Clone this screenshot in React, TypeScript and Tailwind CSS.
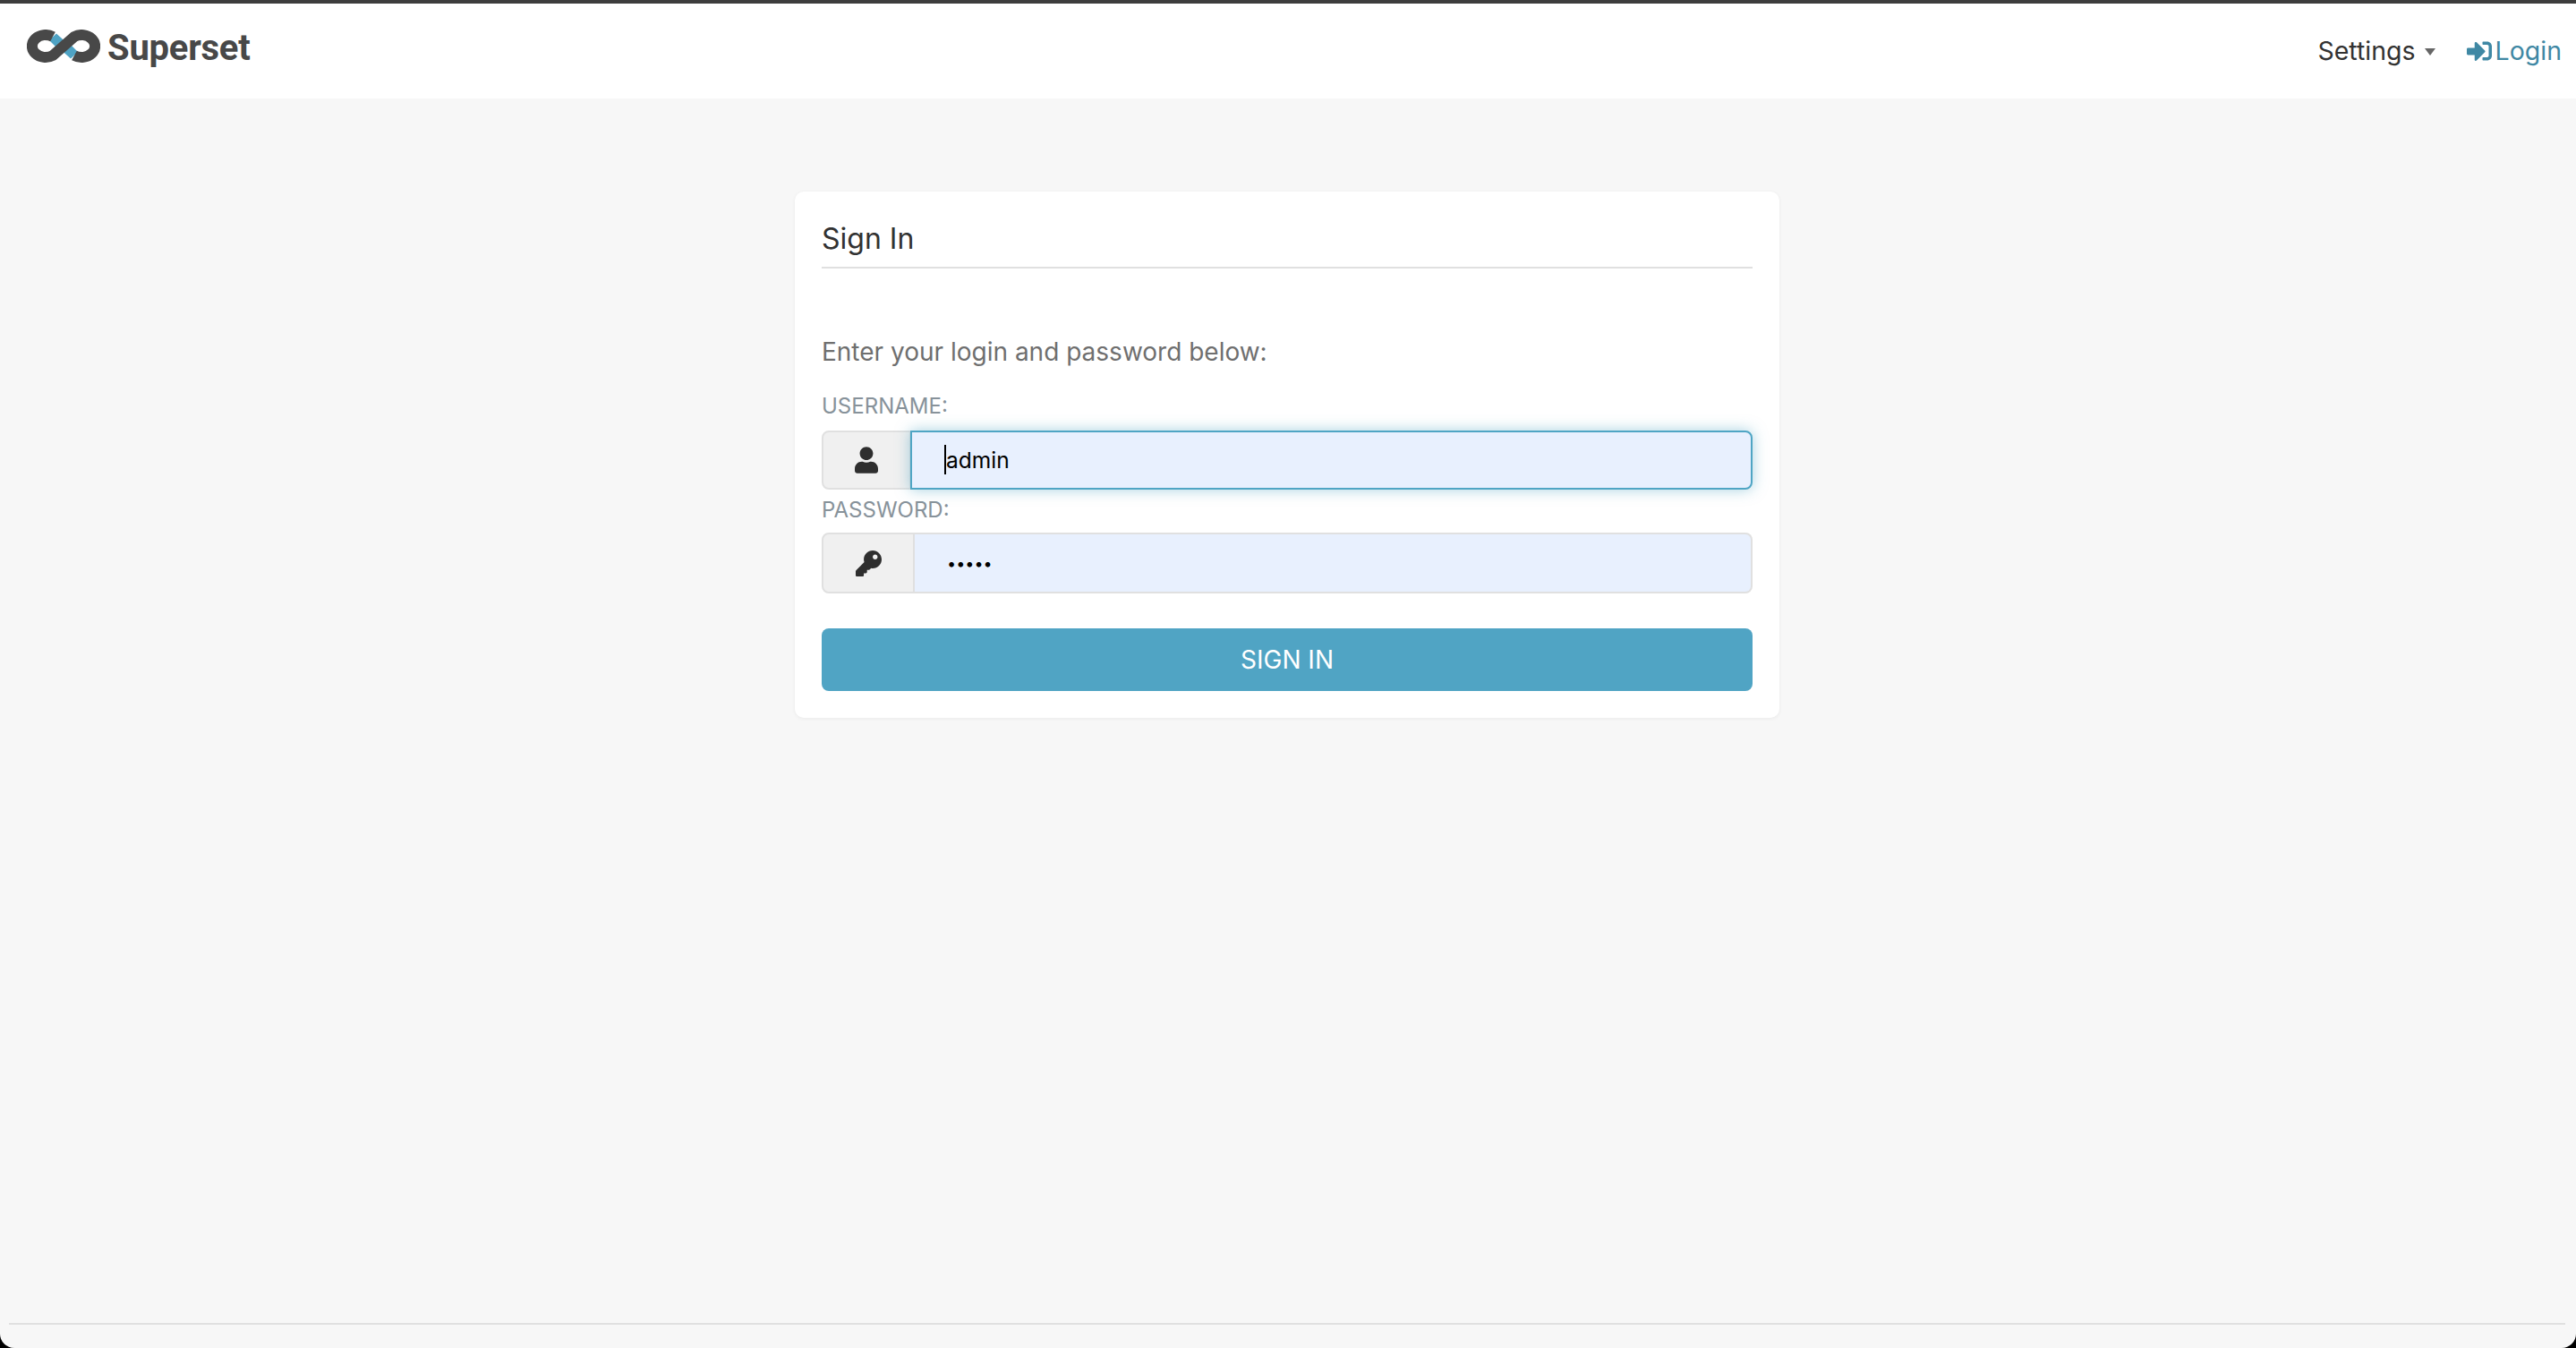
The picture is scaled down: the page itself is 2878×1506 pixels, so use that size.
import type { FC } from 'react'
import { FaKey, FaSignInAlt, FaUser } from 'react-icons/fa'

const Logo: FC = () => (
  <svg viewBox="0 0 82 38" className="w-[82px] h-[38px] mb-[4px]" fill="none">
    <polygon points="25,12 33,4.5 42.7,13.3 35,22" fill="#4fa3c4" />
    <polygon points="57,25 49,32.5 39.3,23.7 47,15" fill="#4fa3c4" />
    <path
      d="M29 8 A15 12.5 0 1 0 29 29 L53 8 A15 12.5 0 1 1 53 29"
      stroke="#484848"
      strokeWidth="12"
    />
  </svg>
)

const App: FC = () => {
  return (
    <div className="bg-black">
      <div className="h-[1506px] flex flex-col bg-[#f7f7f7] rounded-b-[16px] font-['Inter',sans-serif]">
        <header className="h-[110px] shrink-0 bg-white border-t-4 border-[#3d3d3d] pl-[30px] pr-[16px] flex items-center justify-between">
          <a className="flex items-center gap-[8px] mb-[6px]">
            <Logo />
            <span className="font-['Roboto',sans-serif] font-bold text-[40px] leading-none text-[#484848] tracking-[-0.25px]">
              Superset
            </span>
          </a>

          <nav className="flex items-center text-[28.5px]">
            <button className="flex items-center text-[#323232]">
              Settings
              <span className="ml-[10px] mt-[2px] w-0 h-0 border-x-[6px] border-t-[8px] border-x-transparent border-t-[#666666]" />
            </button>
            <a className="ml-[35px] flex items-center text-[#3f88a4]">
              <FaSignInAlt className="w-[28px] h-[28px] mr-[4px]" />
              Login
            </a>
          </nav>
        </header>

        <main className="flex-1 pt-[104px]">
          <div className="w-[1100px] ml-[888px] bg-white rounded-[10px] shadow-[0_1px_4px_rgba(0,0,0,0.06)] px-[30px] pt-[30px] pb-[30px]">
            <h4 className="text-[32px] leading-[46px] h-[56px] text-[#323232] border-b-2 border-[#e0e0e0]">Sign In</h4>

            <p className="mt-[73px] text-[28px] leading-[40px] text-[#6f6f6f]">
              Enter your login and password below:
            </p>

            <label className="block mt-[26px] text-[24px] leading-[30px] text-[#87929a]">USERNAME:</label>
            <div className="mt-[12px] flex h-[66px]">
              <span className="w-[100px] -mr-px shrink-0 flex items-center justify-center bg-[#f0f0f0] border-2 border-[#e0e0e0] rounded-l-[8px] text-[#2e2e2e]">
                <FaUser className="w-[26px] h-[30px]" />
              </span>
              <div className="relative flex-1">
                <input
                  type="text"
                  readOnly
                  value="admin"
                  className="w-full h-full pl-[38px] bg-[#e8f0fe] border-2 border-[#4fa5c4] rounded-r-[8px] shadow-[0_0_16px_rgba(79,165,196,0.5)] text-[24.5px] text-black outline-none"
                />
                <span className="absolute left-[38px] top-[16px] w-[2px] h-[33px] bg-black" />
              </div>
            </div>

            <label className="block mt-[8px] text-[24px] leading-[30px] text-[#87929a]">PASSWORD:</label>
            <div className="mt-[10px] flex h-[68px]">
              <span className="w-[104px] shrink-0 flex items-center justify-center bg-[#f0f0f0] border-2 border-[#e0e0e0] rounded-l-[8px] text-[#2e2e2e]">
                <FaKey className="w-[29px] h-[29px]" />
              </span>
              <input
                type="password"
                readOnly
                value="admin"
                className="flex-1 h-full pl-[36px] bg-[#e8f0fe] border-2 border-l-0 border-[#e0e0e0] rounded-r-[8px] text-[18px] text-black outline-none"
              />
            </div>

            <button className="mt-[39px] w-full h-[70px] bg-[#50a4c4] rounded-[8px] text-white text-[28px]">
              SIGN IN
            </button>
          </div>
        </main>

        <footer className="ml-[10px] mr-[12px] mb-[26px] h-[2px] bg-[#e0e0e0]" />
      </div>
    </div>
  )
}

export default App
